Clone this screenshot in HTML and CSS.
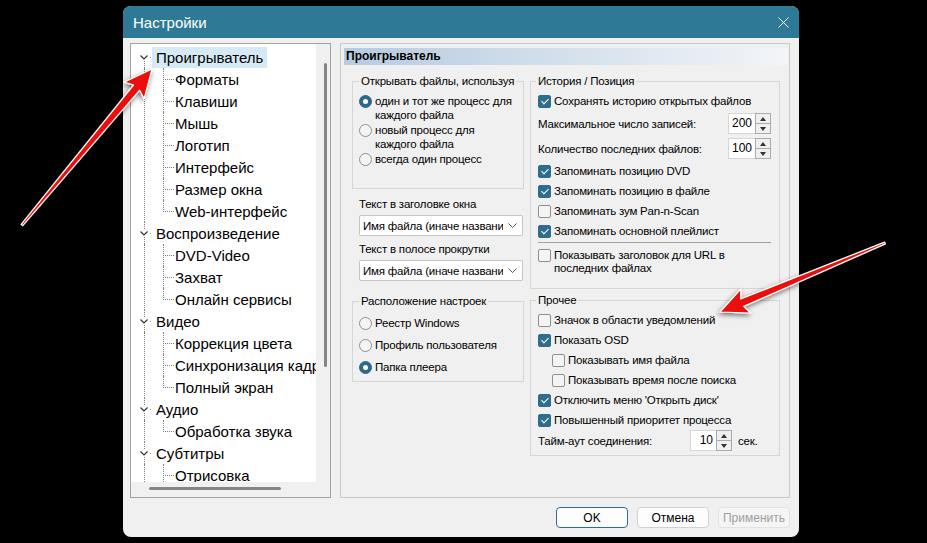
FILE: index.html
```html
<!DOCTYPE html>
<html lang="ru">
<head>
  <meta charset="UTF-8" />
  <title>Настройки</title>
  <link rel="stylesheet" href="styles.css">
</head>
<body>

  <div class="dlg">
    <!-- Title bar -->
    <div class="titlebar">
      <span>Настройки</span>
      <svg class="close" width="11" height="11" viewBox="0 0 11 11"><path d="M0.5 0.5L10.5 10.5M10.5 0.5L0.5 10.5"/></svg>
    </div>

    <div class="dlg-body">
      <div class="panels">

        <!-- Tree -->
        <div class="tree-panel">
          <div class="tree-view">
            <ul class="tree">
              <li class="node">
                <div class="row sel">
                  <svg class="tw" width="16" height="22" viewBox="0 0 16 22"><path class="ln" d="M8.5 15V22"/><path class="chev" d="M4.5 9.5l3.5 3.5 3.5-3.5"/><rect x="14" y="11" width="1" height="1"/></svg>
                  <span class="label">Проигрыватель</span>
                </div>
                <ul class="kids">
                  <li><div class="row"><span class="branch"></span><span class="label">Форматы</span></div></li>
                  <li><div class="row"><span class="branch"></span><span class="label">Клавиши</span></div></li>
                  <li><div class="row"><span class="branch"></span><span class="label">Мышь</span></div></li>
                  <li><div class="row"><span class="branch"></span><span class="label">Логотип</span></div></li>
                  <li><div class="row"><span class="branch"></span><span class="label">Интерфейс</span></div></li>
                  <li><div class="row"><span class="branch"></span><span class="label">Размер окна</span></div></li>
                  <li><div class="row"><span class="branch"></span><span class="label">Web-интерфейс</span></div></li>
                </ul>
              </li>
              <li class="node">
                <div class="row">
                  <svg class="tw" width="16" height="22" viewBox="0 0 16 22"><path class="ln" d="M8.5 0V8M8.5 15V22"/><path class="chev" d="M4.5 9.5l3.5 3.5 3.5-3.5"/><rect x="14" y="11" width="1" height="1"/></svg>
                  <span class="label">Воспроизведение</span>
                </div>
                <ul class="kids">
                  <li><div class="row"><span class="branch"></span><span class="label">DVD-Video</span></div></li>
                  <li><div class="row"><span class="branch"></span><span class="label">Захват</span></div></li>
                  <li><div class="row"><span class="branch"></span><span class="label">Онлайн сервисы</span></div></li>
                </ul>
              </li>
              <li class="node">
                <div class="row">
                  <svg class="tw" width="16" height="22" viewBox="0 0 16 22"><path class="ln" d="M8.5 0V8M8.5 15V22"/><path class="chev" d="M4.5 9.5l3.5 3.5 3.5-3.5"/><rect x="14" y="11" width="1" height="1"/></svg>
                  <span class="label">Видео</span>
                </div>
                <ul class="kids">
                  <li><div class="row"><span class="branch"></span><span class="label">Коррекция цвета</span></div></li>
                  <li><div class="row"><span class="branch"></span><span class="label">Синхронизация кадров</span></div></li>
                  <li><div class="row"><span class="branch"></span><span class="label">Полный экран</span></div></li>
                </ul>
              </li>
              <li class="node">
                <div class="row">
                  <svg class="tw" width="16" height="22" viewBox="0 0 16 22"><path class="ln" d="M8.5 0V8M8.5 15V22"/><path class="chev" d="M4.5 9.5l3.5 3.5 3.5-3.5"/><rect x="14" y="11" width="1" height="1"/></svg>
                  <span class="label">Аудио</span>
                </div>
                <ul class="kids">
                  <li><div class="row"><span class="branch"></span><span class="label">Обработка звука</span></div></li>
                </ul>
              </li>
              <li class="node">
                <div class="row">
                  <svg class="tw" width="16" height="22" viewBox="0 0 16 22"><path class="ln" d="M8.5 0V8M8.5 15V22"/><path class="chev" d="M4.5 9.5l3.5 3.5 3.5-3.5"/><rect x="14" y="11" width="1" height="1"/></svg>
                  <span class="label">Субтитры</span>
                </div>
                <ul class="kids">
                  <li><div class="row"><span class="branch"></span><span class="label">Отрисовка</span></div></li>
                  <li><div class="row"><span class="branch"></span><span class="label">Стиль по умолчанию</span></div></li>
                  <li><div class="row"><span class="branch"></span><span class="label">Разное</span></div></li>
                </ul>
              </li>
            </ul>
          </div>
          <div class="vscroll"><div class="vthumb"></div></div>
          <div class="hscroll"><div class="hthumb"></div></div>
          <div class="corner"></div>
        </div>

        <!-- Settings page -->
        <div class="page">
          <div class="page-head">Проигрыватель</div>
          <div class="cols">

            <div class="col-left">
              <fieldset class="grp grp-open">
                <legend>Открывать файлы, используя</legend>
                <div class="opt"><span class="radio on"></span><span>один и тот же процесс для<br>каждого файла</span></div>
                <div class="opt"><span class="radio"></span><span>новый процесс для<br>каждого файла</span></div>
                <div class="opt"><span class="radio"></span><span>всегда один процесс</span></div>
              </fieldset>

              <div class="field-label first">Текст в заголовке окна</div>
              <div class="select">
                <span class="select-text">Имя файла (иначе название файла)</span>
                <svg width="9" height="6" viewBox="0 0 9 6"><path d="M0.5 0.5l4 4 4-4"/></svg>
              </div>
              <div class="field-label">Текст в полосе прокрутки</div>
              <div class="select">
                <span class="select-text">Имя файла (иначе название файла)</span>
                <svg width="9" height="6" viewBox="0 0 9 6"><path d="M0.5 0.5l4 4 4-4"/></svg>
              </div>

              <fieldset class="grp grp-store">
                <legend>Расположение настроек</legend>
                <div class="opt opt-tall"><span class="radio"></span><span>Реестр Windows</span></div>
                <div class="opt opt-tall"><span class="radio"></span><span>Профиль пользователя</span></div>
                <div class="opt opt-tall"><span class="radio on"></span><span>Папка плеера</span></div>
              </fieldset>
            </div>

            <div class="col-right">
              <fieldset class="grp grp-r grp-hist">
                <legend>История / Позиция</legend>
                <div class="chk"><span class="cb on"></span>Сохранять историю открытых файлов</div>
                <div class="spin-row sr1">
                  <span>Максимальное число записей:</span>
                  <span class="spin"><span class="spin-val">200</span><span class="spin-btns"><span class="up"></span><span class="dn"></span></span></span>
                </div>
                <div class="spin-row sr2">
                  <span>Количество последних файлов:</span>
                  <span class="spin"><span class="spin-val">100</span><span class="spin-btns"><span class="up"></span><span class="dn"></span></span></span>
                </div>
                <div class="chk after-spin"><span class="cb on"></span>Запоминать позицию DVD</div>
                <div class="chk"><span class="cb on"></span>Запоминать позицию в файле</div>
                <div class="chk"><span class="cb"></span>Запоминать зум Pan-n-Scan</div>
                <div class="chk"><span class="cb on"></span>Запоминать основной плейлист</div>
                <div class="sep"></div>
                <div class="chk multi"><span class="cb"></span><span>Показывать заголовок для URL в<br>последних файлах</span></div>
              </fieldset>

              <fieldset class="grp grp-r grp-misc">
                <legend>Прочее</legend>
                <div class="chk"><span class="cb"></span>Значок в области уведомлений</div>
                <div class="chk"><span class="cb on"></span>Показать OSD</div>
                <div class="chk sub"><span class="cb"></span>Показывать имя файла</div>
                <div class="chk sub"><span class="cb"></span>Показывать время после поиска</div>
                <div class="chk"><span class="cb on"></span>Отключить меню 'Открыть диск'</div>
                <div class="chk"><span class="cb on"></span>Повышенный приоритет процесса</div>
                <div class="spin-row timeout">
                  <span class="timeout-label">Тайм-аут соединения:</span>
                  <span class="spin spin-sm"><span class="spin-val">10</span><span class="spin-btns"><span class="up"></span><span class="dn"></span></span></span>
                  <span class="unit">сек.</span>
                </div>
              </fieldset>
            </div>

          </div>
        </div>
      </div>

      <!-- Dialog buttons -->
      <div class="buttons">
        <button class="btn btn-default">OK</button>
        <button class="btn">Отмена</button>
        <button class="btn" disabled>Применить</button>
      </div>
    </div>
  </div>

  <!-- Annotation arrows drawn over the screenshot -->
  <svg class="arrows" width="927" height="543" viewBox="0 0 927 543">
    <defs>
      <filter id="shadow" x="-20%" y="-20%" width="140%" height="140%">
        <feDropShadow dx="-1" dy="2" stdDeviation="2.5" flood-color="#000" flood-opacity="0.55"/>
      </filter>
    </defs>
    <polygon class="arrow" filter="url(#shadow)" points="21.2,224.4 133.5,85 124.1,82.2 152,69 144.1,98.8 139.7,90.2 22.8,225.6"/>
    <polygon class="arrow" filter="url(#shadow)" points="884.6,242.1 740.7,299 740.8,289.2 720,312 750.8,313.2 743.7,306.4 885.4,243.9"/>
  </svg>

</body>
</html>
```

FILE: styles.css
```css
body {
  margin: 0;
  width: 927px;
  height: 543px;
  overflow: hidden;
  position: relative;
  box-sizing: border-box;
  padding: 6px 0 0 123px;
  background: #000;
  font-family: "Liberation Sans", Arial, sans-serif;
  font-size: 11.5px;
  letter-spacing: -0.2px;
  color: #000;
}

/* Dialog window */
.dlg {
  width: 676px;
  height: 531px;
  background: #f0f0f0;
  border-radius: 8px;
  overflow: hidden;
  display: flex;
  flex-direction: column;
}
.titlebar {
  height: 32px;
  flex: none;
  background: #2e7a96;
  color: #fff;
  font-size: 15px;
  letter-spacing: 0;
  display: flex;
  align-items: center;
  justify-content: space-between;
  padding: 0 10px 0 10px;
}
.close path {
  stroke: #fff;
  stroke-width: 1;
}
.dlg-body {
  flex: 1;
  padding: 5px 9px 9px 7px;
  display: flex;
  flex-direction: column;
}
.panels {
  display: flex;
  gap: 9px;
  height: 455px;
}

/* Tree panel */
.tree-panel {
  width: 201px;
  box-sizing: border-box;
  border: 1px solid #a3a3a3;
  background: #f0f0f0;
  display: grid;
  grid-template-columns: 1fr 14px;
  grid-template-rows: 1fr 15px;
}
.tree-view {
  background: #fff;
  overflow: hidden;
  padding-top: 2px;
  font-size: 15px;
  letter-spacing: 0;
  white-space: nowrap;
}
.vscroll {
  padding: 19px 0 0 8px;
}
.vthumb {
  width: 3px;
  height: 304px;
  background: #858585;
  border-radius: 2px;
}
.hscroll {
  padding: 5px 0 0 18px;
}
.hthumb {
  width: 132px;
  height: 3px;
  background: #858585;
  border-radius: 2px;
}
.tree, .tree ul {
  list-style: none;
  margin: 0;
  padding: 0;
}
.tree {
  padding-left: 5px;
}
.tree .row {
  display: flex;
  align-items: center;
  height: 22px;
}
.tw {
  flex: none;
}
.tw .ln {
  stroke: #808080;
  stroke-dasharray: 1 1;
}
.tw .chev {
  fill: none;
  stroke: #333;
  stroke-width: 1.2;
}
.tw rect {
  fill: #808080;
}
.node > .row .label {
  padding: 0 4px;
  line-height: 21px;
}
.row.sel .label {
  background: #d6eaf5;
}
.kids {
  margin-left: 8px !important;
  border-left: 1px dotted #808080;
}
.kids li {
  padding-left: 18px;
}
.branch {
  flex: none;
  align-self: stretch;
  width: 10px;
  border-left: 1px dotted #808080;
  background: linear-gradient(to right, #808080 50%, transparent 0) 1px 11px / 2px 1px repeat-x;
}
.kids li:last-child .branch {
  align-self: flex-start;
  height: 12px;
}
.kids .label {
  padding-left: 1px;
}

/* Settings page */
.page {
  flex: 1;
  border: 1px solid #c9c9c9;
  padding: 4px 1px 0 3px;
}
.page-head {
  height: 17px;
  line-height: 17px;
  padding-left: 2px;
  font-size: 12px;
  letter-spacing: 0;
  font-weight: bold;
  background: linear-gradient(to right, #b6cbe0, #f3f5f8);
}
.cols {
  display: flex;
  gap: 6px;
  margin: 9px 0 0 8px;
}
.col-left {
  width: 172px;
}
.col-right {
  width: 250px;
}

/* Group boxes */
.grp {
  margin: 0;
  min-width: 0;
  border: 1px solid #d5d5d5;
  padding: 2px 8px 13px 7px;
}
.grp legend {
  padding: 0 2px;
  line-height: 15px;
  white-space: nowrap;
}
.grp-r legend {
  margin-left: -2px;
}
.grp-open {
  padding: 5px 4px 21px 6px;
}
.grp-store {
  margin-top: 13px;
  padding: 3px 4px 3px 6px;
}
.grp-misc {
  margin-top: 4px;
  padding-bottom: 4px;
}

/* Radio buttons */
.opt {
  display: flex;
  align-items: flex-start;
  gap: 3px;
  line-height: 14px;
  margin-bottom: 1px;
  white-space: nowrap;
}
.opt-tall {
  height: 22px;
  align-items: center;
  margin: 0;
}
.radio {
  flex: none;
  width: 13px;
  height: 13px;
  box-sizing: border-box;
  border: 1px solid #8f8f8f;
  border-radius: 50%;
  background: #f4f4f4;
  display: flex;
  align-items: center;
  justify-content: center;
}
.opt .radio {
  margin-top: 1px;
}
.opt-tall .radio {
  margin-top: 0;
}
.radio.on {
  background: #2b6a8a;
  border-color: #2b6a8a;
}
.radio.on::after {
  content: "";
  width: 5px;
  height: 5px;
  border-radius: 50%;
  background: #fff;
}

/* Combo boxes */
.field-label {
  margin: 6px 0 0 7px;
  line-height: 15px;
}
.field-label.first {
  margin-top: 8px;
}
.select {
  margin: 3px 0 0 7px;
  width: 164px;
  height: 21px;
  box-sizing: border-box;
  border: 1px solid #c4c4c4;
  border-radius: 2px;
  background: #fff;
  display: flex;
  align-items: center;
  padding: 0 5px 0 3px;
  gap: 5px;
}
.select-text {
  flex: 1;
  overflow: hidden;
  white-space: nowrap;
}
.select svg {
  flex: none;
}
.select path {
  fill: none;
  stroke: #555;
}

/* Check boxes */
.chk {
  display: flex;
  align-items: center;
  gap: 3px;
  height: 20px;
  white-space: nowrap;
}
.chk.sub {
  padding-left: 14px;
}
.chk.after-spin {
  margin-top: 2px;
}
.chk.multi {
  height: auto;
  align-items: flex-start;
  line-height: 13px;
}
.cb {
  flex: none;
  width: 13px;
  height: 13px;
  box-sizing: border-box;
  border: 1px solid #8f8f8f;
  border-radius: 2px;
  background: #f4f4f4;
  display: flex;
  justify-content: center;
}
.cb.on {
  background: #2e6d8c;
  border-color: #2e6d8c;
}
.cb.on::after {
  content: "";
  width: 3px;
  height: 6px;
  margin-top: 1px;
  border-right: 1.5px solid #fff;
  border-bottom: 1.5px solid #fff;
  transform: rotate(45deg);
}
.sep {
  height: 1px;
  background: #a0a0a0;
  margin: 1px 0 6px;
}

/* Spin boxes */
.spin-row {
  display: flex;
  align-items: center;
  justify-content: space-between;
  height: 21px;
}
.sr1 {
  margin-top: 2px;
}
.sr2 {
  margin-top: 4px;
}
.spin {
  display: flex;
  height: 21px;
}
.spin-val {
  width: 27px;
  box-sizing: border-box;
  background: #fff;
  border: 1px solid #d6d6d6;
  border-right: none;
  text-align: right;
  padding-right: 3px;
  line-height: 19px;
  font-size: 12px;
  letter-spacing: 0;
}
.spin-sm .spin-val {
  width: 26px;
}
.spin-btns {
  width: 16px;
  box-sizing: border-box;
  border: 1px solid #ababab;
  background: #efefef;
  display: flex;
  flex-direction: column;
}
.spin-btns span {
  flex: 1;
  display: flex;
  align-items: center;
  justify-content: center;
}
.spin-btns .dn {
  border-top: 1px solid #ababab;
}
.spin-btns .up::after {
  content: "";
  border-left: 3.5px solid transparent;
  border-right: 3.5px solid transparent;
  border-bottom: 4px solid #333;
}
.spin-btns .dn::after {
  content: "";
  border-left: 3.5px solid transparent;
  border-right: 3.5px solid transparent;
  border-top: 4px solid #333;
}
.timeout {
  justify-content: flex-start;
}
.timeout-label {
  width: 152px;
}
.unit {
  margin-left: 6px;
}

/* Dialog buttons */
.buttons {
  display: flex;
  justify-content: flex-end;
  gap: 9px;
  margin-top: 9px;
}
.btn {
  width: 72px;
  height: 21px;
  padding: 0;
  font: inherit;
  font-size: 12px;
  letter-spacing: 0;
  color: #000;
  background: #fdfdfd;
  border: 1px solid #d0d0d0;
  border-radius: 4px;
}
.btn-default {
  border-color: #2a6f94;
}
.btn:disabled {
  background: #f5f5f5;
  border-color: #e3e3e3;
  color: #a0a0a0;
}

/* Arrows */
.arrows {
  position: absolute;
  left: 0;
  top: 0;
  pointer-events: none;
}
.arrow {
  fill: #ec1111;
  stroke: #fff;
  stroke-width: 1.2;
  stroke-linejoin: round;
}
```
